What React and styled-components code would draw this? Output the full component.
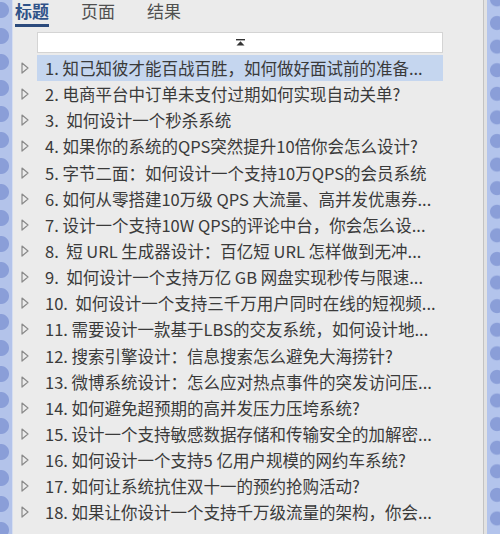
import React from 'react';
import styled, { createGlobalStyle } from 'styled-components';

const items = [
  '1. 知己知彼才能百战百胜，如何做好面试前的准备...',
  '2. 电商平台中订单未支付过期如何实现自动关单?',
  '3.  如何设计一个秒杀系统',
  '4. 如果你的系统的QPS突然提升10倍你会怎么设计?',
  '5. 字节二面：如何设计一个支持10万QPS的会员系统',
  '6. 如何从零搭建10万级 QPS 大流量、高并发优惠券...',
  '7. 设计一个支持10W QPS的评论中台，你会怎么设...',
  '8.  短 URL 生成器设计：百亿短 URL 怎样做到无冲...',
  '9.  如何设计一个支持万亿 GB 网盘实现秒传与限速...',
  '10.  如何设计一个支持三千万用户同时在线的短视频...',
  '11. 需要设计一款基于LBS的交友系统，如何设计地...',
  '12. 搜索引擎设计：信息搜索怎么避免大海捞针?',
  '13. 微博系统设计：怎么应对热点事件的突发访问压...',
  '14. 如何避免超预期的高并发压力压垮系统?',
  '15. 设计一个支持敏感数据存储和传输安全的加解密...',
  '16. 如何设计一个支持5 亿用户规模的网约车系统?',
  '17. 如何让系统抗住双十一的预约抢购活动?',
  '18. 如果让你设计一个支持千万级流量的架构，你会...',
];

const tabs = ['标题', '页面', '结果'];

export default function App() {
  return (
    <>
      <GlobalStyle />
      <Wrapper>
        <LeftRing />
        <Panel>
          <TabBar>
            {tabs.map((t, i) => (
              <Tab key={t} active={i === 0}>{t}</Tab>
            ))}
          </TabBar>
          <SearchBox>
            <svg width="9" height="7" viewBox="0 0 9 7">
              <rect x="0" y="0" width="9" height="1.4" fill="#333" />
              <polygon points="4.5,2.2 8.5,6.6 0.5,6.6" fill="#333" />
            </svg>
          </SearchBox>
          <List>
            {items.map((text, i) => (
              <Row key={i}>
                <Arrow>
                  <svg width="8" height="12" viewBox="0 0 8 12">
                    <polygon
                      points="1,1 7,6 1,11"
                      fill="none"
                      stroke="#8a8a8a"
                      strokeWidth="1.2"
                      strokeLinejoin="round"
                    />
                  </svg>
                </Arrow>
                <Label selected={i === 0}>{text}</Label>
              </Row>
            ))}
          </List>
        </Panel>
        <Gap />
        <RightRing />
      </Wrapper>
    </>
  );
}

const GlobalStyle = createGlobalStyle`
  body {
    margin: 0;
    background: #ebebeb;
    font-family: "Microsoft YaHei", "Noto Sans CJK SC", "Noto Sans", sans-serif;
  }
`;

const Wrapper = styled.div`
  width: 500px;
  height: 534px;
  display: flex;
  overflow: hidden;
`;

const LeftRing = styled.div`
  width: 12px;
  flex-shrink: 0;
  background-color: #b3c3ea;
  background-image: radial-gradient(circle at 1px 13px, #8a9ed8 7.5px, transparent 8.5px);
  background-size: 12px 26px;
  background-position: 0 -3px;
  border-right: 1px solid #d6def0;
`;

const Panel = styled.div`
  width: 470px;
  flex-shrink: 0;
  background: #ebebeb;
  border-right: 1px solid #c3c3c3;
  display: flex;
  flex-direction: column;
`;

const Gap = styled.div`
  width: 3px;
  background: #e2e2e2;
`;

const RightRing = styled.div`
  flex: 1;
  background-color: #b3c4ec;
  background-image: radial-gradient(circle at 10px 11.8px, #8a9ed8 6.5px, transparent 7.5px);
  background-size: 13px 23.6px;
  background-position: 0 -12.4px;
`;

const TabBar = styled.div`
  height: 27px;
  display: flex;
  align-items: flex-end;
  gap: 32px;
  padding-left: 2px;
`;

const Tab = styled.div`
  font-size: 17px;
  line-height: 21px;
  padding-bottom: 3px;
  border-bottom: 3px solid ${(p) => (p.active ? '#2b4a7c' : 'transparent')};
  color: ${(p) => (p.active ? '#2f5288' : '#505050')};
  font-weight: ${(p) => (p.active ? 'bold' : 'normal')};
`;

const SearchBox = styled.div`
  margin: 5px 0 0 24px;
  width: 404px;
  height: 19px;
  background: #fff;
  border: 1px solid #d4d4d4;
  display: flex;
  align-items: center;
  justify-content: center;
`;

const List = styled.div`
  margin-top: 2px;
  display: flex;
  flex-direction: column;
`;

const Row = styled.div`
  height: 26.15px;
  display: flex;
  align-items: stretch;
`;

const Arrow = styled.div`
  width: 24px;
  padding-left: 8px;
  box-sizing: border-box;
  display: flex;
  align-items: center;
`;

const Label = styled.div`
  width: 406px;
  box-sizing: border-box;
  padding-left: 8px;
  display: flex;
  align-items: center;
  font-size: 16.5px;
  color: #3a3a3a;
  white-space: pre;
  overflow: hidden;
  background: ${(p) => (p.selected ? '#c5d6ef' : 'transparent')};
`;
